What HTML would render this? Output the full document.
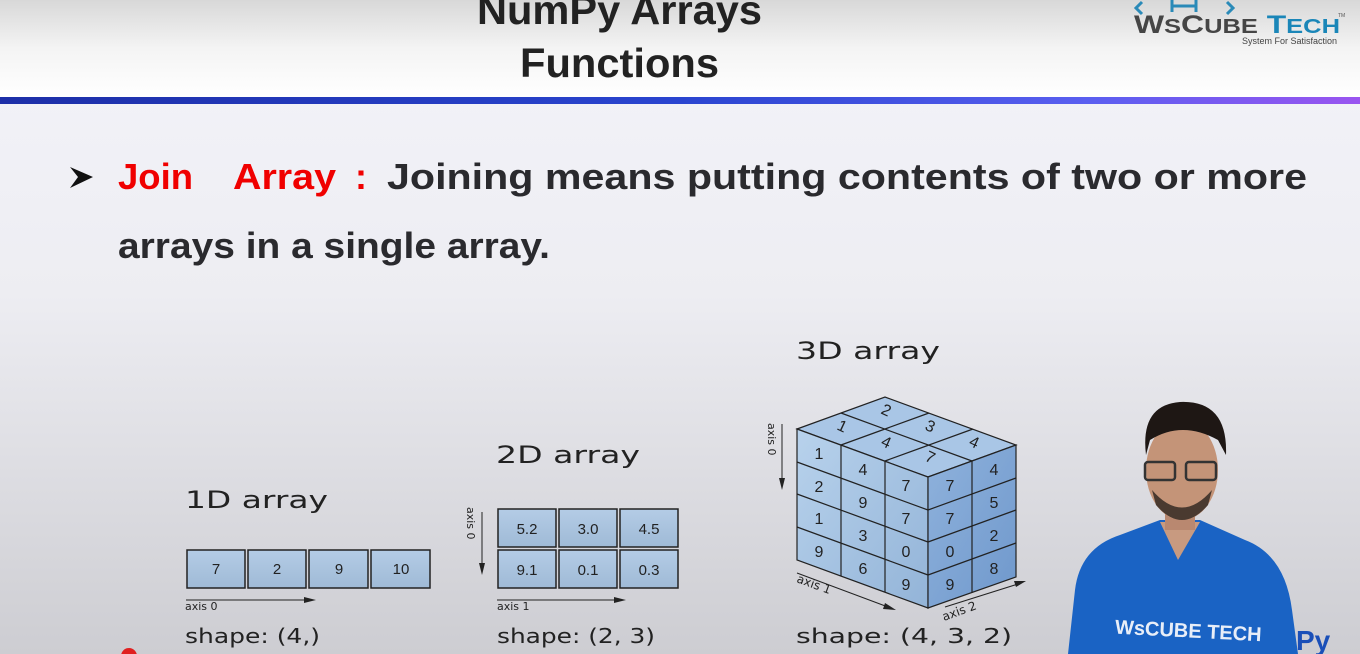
<!DOCTYPE html>
<html><head><meta charset="utf-8"><style>
html,body{margin:0;padding:0;width:1360px;height:654px;overflow:hidden;background:#f2f2f8}
svg{display:block}
text{font-family:"Liberation Sans",sans-serif}
.dj{font-family:"DejaVu Sans","Liberation Sans",sans-serif}
</style></head><body>
<svg width="1360" height="654" viewBox="0 0 1360 654" xmlns="http://www.w3.org/2000/svg">
<defs>
<linearGradient id="hdr" x1="0" y1="0" x2="0" y2="1"><stop offset="0" stop-color="#d8d8d8"/><stop offset="0.5" stop-color="#f4f4f4"/><stop offset="1" stop-color="#ffffff"/></linearGradient>
<linearGradient id="bar" x1="0" y1="0" x2="1" y2="0"><stop offset="0" stop-color="#1d2fa8"/><stop offset="0.5" stop-color="#2a45d0"/><stop offset="0.8" stop-color="#5a5ff0"/><stop offset="1" stop-color="#9a55f0"/></linearGradient>
<linearGradient id="bg" x1="0" y1="0" x2="0" y2="1"><stop offset="0" stop-color="#f4f4fa"/><stop offset="0.45" stop-color="#ededf2"/><stop offset="1" stop-color="#cdcdd2"/></linearGradient>
<linearGradient id="cell" x1="0" y1="0" x2="0" y2="1"><stop offset="0" stop-color="#b4cce6"/><stop offset="1" stop-color="#9fbad6"/></linearGradient>
<linearGradient id="face1" x1="0" y1="0" x2="1" y2="1"><stop offset="0" stop-color="#b8d2ec"/><stop offset="1" stop-color="#93b4d8"/></linearGradient>
<linearGradient id="face2" x1="0" y1="0" x2="1" y2="1"><stop offset="0" stop-color="#8fb2dc"/><stop offset="1" stop-color="#6f98cc"/></linearGradient>
</defs>
<rect x="0" y="0" width="1360" height="654" fill="url(#bg)"/>
<rect x="0" y="0" width="1360" height="97" fill="url(#hdr)"/>
<rect x="0" y="97" width="1360" height="7" fill="url(#bar)"/>

<text x="477" y="24" textLength="285" lengthAdjust="spacingAndGlyphs" font-size="41" font-weight="bold" fill="#222">NumPy Arrays</text>
<text x="520" y="77" textLength="199" lengthAdjust="spacingAndGlyphs" font-size="41" font-weight="bold" fill="#222">Functions</text>

<!-- logo -->
<path d="M1142 2 l-6 6 l6 6 M1227 2 l6 6 l-6 6 M1172 0 v12 M1196 0 v12 M1172 6 h24" stroke="#2a8ab8" stroke-width="3" fill="none"/>
<text x="1134" y="33" textLength="206" lengthAdjust="spacingAndGlyphs" font-size="25" font-weight="bold" fill="#454545">W<tspan font-size="20">S</tspan>C<tspan font-size="20">UBE</tspan> <tspan fill="#1a86b8">T<tspan font-size="20">ECH</tspan></tspan></text>
<text x="1338" y="17" font-size="5" fill="#555">TM</text>
<text x="1242" y="44" font-size="9" fill="#444">System For Satisfaction</text>

<!-- bullet -->
<path d="M70 167 L93 177 L70 188 L78 177 Z" fill="#111"/>
<text y="189" font-size="36" font-weight="bold" fill="#2a2a2e"><tspan x="118" fill="#f00000" textLength="75" lengthAdjust="spacingAndGlyphs">Join</tspan><tspan x="233" fill="#f00000" textLength="103" lengthAdjust="spacingAndGlyphs">Array</tspan><tspan x="355" fill="#f00000">:</tspan><tspan x="387" textLength="920" lengthAdjust="spacingAndGlyphs">Joining means putting contents of two or more</tspan></text>
<text x="118" y="258" font-size="36" font-weight="bold" fill="#2a2a2e" textLength="432" lengthAdjust="spacingAndGlyphs">arrays in a single array.</text>

<!-- 1D -->
<text class="dj" x="185" y="508" font-size="24" fill="#222" textLength="143" lengthAdjust="spacingAndGlyphs">1D array</text>
<g stroke="#222" stroke-width="1.5" fill="url(#cell)">
<rect x="187" y="550" width="58" height="38"/><rect x="248" y="550" width="58" height="38"/><rect x="309" y="550" width="59" height="38"/><rect x="371" y="550" width="59" height="38"/>
</g>
<g class="dj" font-size="15" fill="#222" text-anchor="middle"><text x="216" y="574">7</text><text x="277" y="574">2</text><text x="339" y="574">9</text><text x="401" y="574">10</text></g>
<line x1="186" y1="600" x2="306" y2="600" stroke="#222"/><path d="M316 600 l-12 -3 v6z" fill="#222"/>
<text class="dj" x="185" y="610" font-size="11" fill="#222">axis 0</text>
<text class="dj" x="185" y="643" font-size="20" fill="#222" textLength="135" lengthAdjust="spacingAndGlyphs">shape: (4,)</text>

<!-- 2D -->
<text class="dj" x="496" y="463" font-size="24" fill="#222" textLength="144" lengthAdjust="spacingAndGlyphs">2D array</text>
<g stroke="#222" stroke-width="1.5" fill="url(#cell)">
<rect x="498" y="509" width="58" height="38"/><rect x="559" y="509" width="58" height="38"/><rect x="620" y="509" width="58" height="38"/>
<rect x="498" y="550" width="58" height="38"/><rect x="559" y="550" width="58" height="38"/><rect x="620" y="550" width="58" height="38"/>
</g>
<g class="dj" font-size="15" fill="#222" text-anchor="middle"><text x="527" y="534">5.2</text><text x="588" y="534">3.0</text><text x="649" y="534">4.5</text><text x="527" y="575">9.1</text><text x="588" y="575">0.1</text><text x="649" y="575">0.3</text></g>
<text class="dj" transform="translate(467,507) rotate(90)" font-size="11" fill="#222">axis 0</text>
<line x1="482" y1="512" x2="482" y2="566" stroke="#222"/><path d="M482 575 l-3 -12 h6z" fill="#222"/>
<line x1="497" y1="600" x2="616" y2="600" stroke="#222"/><path d="M626 600 l-12 -3 v6z" fill="#222"/>
<text class="dj" x="497" y="610" font-size="11" fill="#222">axis 1</text>
<text class="dj" x="497" y="643" font-size="20" fill="#222" textLength="158" lengthAdjust="spacingAndGlyphs">shape: (2, 3)</text>

<!-- 3D -->
<text class="dj" x="796" y="359" font-size="24" fill="#222" textLength="144" lengthAdjust="spacingAndGlyphs">3D array</text>
<g stroke="#222" stroke-width="1.2">
<path d="M797 429 L885 397 L1016 445 L928 477 Z" fill="#a9c6e6"/>
<path d="M797 429 L928 477 L928 608 L797 560 Z" fill="url(#face1)"/>
<path d="M928 477 L1016 445 L1016 577 L928 608 Z" fill="url(#face2)"/>
<path d="M841 413 L972 461 M841 445 L885 429 M885 461 L929 445 M841 445 L929 413 M885 461 L973 429"/>
<path d="M841 445 V576 M885 461 V592 M797 462 L928 510 M797 494 L928 542 M797 527 L928 575"/>
<path d="M972 461 V593 M928 510 L1016 478 M928 542 L1016 510 M928 575 L1016 543"/>
</g>
<g class="dj" font-size="16" fill="#222" text-anchor="middle">
<text x="819" y="459">1</text><text x="819" y="492">2</text><text x="819" y="524">1</text><text x="819" y="557">9</text>
<text x="863" y="475">4</text><text x="863" y="508">9</text><text x="863" y="541">3</text><text x="863" y="574">6</text>
<text x="906" y="491">7</text><text x="906" y="524">7</text><text x="906" y="557">0</text><text x="906" y="590">9</text>
<text x="950" y="491">7</text><text x="950" y="524">7</text><text x="950" y="557">0</text><text x="950" y="590">9</text>
<text x="994" y="475">4</text><text x="994" y="508">5</text><text x="994" y="541">2</text><text x="994" y="574">8</text>
<text transform="translate(840,431) rotate(25)">1</text><text transform="translate(884,447) rotate(25)">4</text><text transform="translate(928,462) rotate(25)">7</text>
<text transform="translate(884,415) rotate(25)">2</text><text transform="translate(928,431) rotate(25)">3</text><text transform="translate(972,447) rotate(25)">4</text>
</g>
<text class="dj" transform="translate(768,423) rotate(90)" font-size="11" fill="#222">axis 0</text>
<line x1="782" y1="424" x2="782" y2="482" stroke="#222"/><path d="M782 490 l-3 -12 h6z" fill="#222"/>
<text class="dj" transform="translate(796,582) rotate(20)" font-size="12" fill="#222">axis 1</text>
<line x1="797" y1="573" x2="888" y2="607" stroke="#222"/><path d="M896 610 l-11 -7 l-2 6z" fill="#222"/>
<text class="dj" transform="translate(944,621) rotate(-20)" font-size="12" fill="#222">axis 2</text>
<line x1="945" y1="607" x2="1018" y2="584" stroke="#222"/><path d="M1026 581 l-12 0 l2 6z" fill="#222"/>
<text class="dj" x="796" y="643" font-size="20" fill="#222" textLength="216" lengthAdjust="spacingAndGlyphs">shape: (4, 3, 2)</text>

<!-- presenter -->
<g>
<path d="M1068 654 L1075 590 Q1080 548 1120 535 L1160 520 L1200 520 L1245 540 Q1285 555 1292 610 L1298 654 Z" fill="#1a63c4"/>
<path d="M1160 522 L1178 560 L1200 522 Z" fill="#c89a80"/>
<rect x="1165" y="490" width="30" height="40" fill="#b98870"/>
<ellipse cx="1182" cy="470" rx="36" ry="50" fill="#c49478"/>
<path d="M1146 455 Q1140 405 1180 402 Q1228 400 1226 455 L1218 440 Q1182 420 1150 440 Z" fill="#1e1714"/>
<path d="M1152 490 Q1182 525 1212 490 L1208 505 Q1182 535 1156 505 Z" fill="#4a3a30"/>
<rect x="1145" y="462" width="30" height="18" rx="3" fill="none" stroke="#333" stroke-width="2.5"/>
<rect x="1186" y="462" width="30" height="18" rx="3" fill="none" stroke="#333" stroke-width="2.5"/>
<text x="1115" y="637" font-size="20" font-weight="bold" fill="#e8eef8" transform="rotate(3 1180 630)">WsCUBE TECH</text>
</g>
<text x="1296" y="650" font-size="28" font-weight="bold" fill="#1a4fb8">Py</text>
<circle cx="129" cy="656" r="8" fill="#e02020"/>
</svg>
</body></html>
